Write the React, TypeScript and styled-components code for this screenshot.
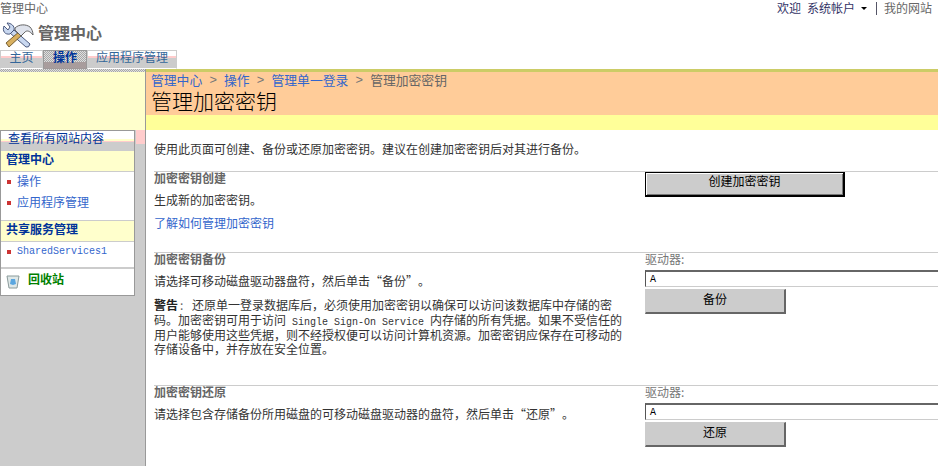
import React from "react";
import styled, { createGlobalStyle } from "styled-components";

const dots = "conic-gradient(#a8a8a8 25%, #dedede 0 50%, #a8a8a8 0 75%, #dedede 0) 0 0 / 2px 2px";

const GlobalStyle = createGlobalStyle`
  html, body {
    margin: 0;
    padding: 0;
    background: #fff;
    overflow: hidden;
  }
  body {
    font-family: "Noto Sans CJK SC", "Liberation Sans", sans-serif;
    font-size: 12px;
    line-height: 14px;
    text-spacing-trim: space-all;
  }
`;

const Page = styled.div`
  width: 938px;
  height: 466px;
  overflow: hidden;
  display: flex;
  flex-direction: column;
`;

const TopBar = styled.div`
  height: 22px;
  display: flex;
  justify-content: space-between;
  color: #666;
  line-height: 15px;
`;

const UserMenu = styled.div`
  display: flex;
  align-items: flex-start;
  padding-right: 6px;
`;

const UserText = styled.span`
  color: #333366;
  margin-right: 6px;
`;

const Caret = styled.span`
  width: 0;
  height: 0;
  margin: 7px 9px 0 0;
  border-left: 3px solid transparent;
  border-right: 3px solid transparent;
  border-top: 3px solid #000;
`;

const Pipe = styled.span`
  width: 1px;
  height: 13px;
  margin: 2px 7px 0 0;
  background: #556;
`;

const Brand = styled.div`
  height: 28px;
  box-sizing: border-box;
  padding: 0 0 2px 2px;
  display: flex;
  align-items: center;
  gap: 4px;
`;

const BrandName = styled.span`
  margin-bottom: 6px;
  font-size: 16px;
  line-height: 18px;
  font-weight: 700;
  color: #666;
`;

const TabRow = styled.div`
  height: 19px;
  display: flex;
`;

const Tab = styled.a<{ $active?: boolean; $width: number }>`
  width: ${(p) => p.$width}px;
  box-sizing: border-box;
  text-align: center;
  line-height: 12px;
  border: 1px solid ${(p) => (p.$active ? "#999" : "#ccc")};
  border-bottom-color: ${(p) => (p.$active ? "#a09999" : "#fff")};
  color: ${(p) => (p.$active ? "#003399" : "#336699")};
  font-weight: ${(p) => (p.$active ? 700 : 400)};
  background: ${(p) =>
    p.$active
      ? `linear-gradient(transparent 0 11px, #a89c9c 11px), ${dots}`
      : "linear-gradient(#fff 0 5px, #ffcccc 5px 7px, #ccc 7px)"};
`;

const Body = styled.div`
  flex: 1;
  display: flex;
  min-height: 0;
`;

const Side = styled.div`
  width: 145px;
  flex: none;
  display: flex;
  flex-direction: column;
  background: #ccc;
  border-right: 1px solid #999;
`;

const SideStrip = styled.div`
  height: 3px;
  background: ${dots};
`;

const SideTop = styled.div`
  height: 58px;
  background: #ffffcc;
`;

const SideRow = styled.div`
  display: flex;
  gap: 1px;
`;

const Pink = styled.div`
  width: 9px;
  height: 14px;
  background: #ffcccc;
`;

const NavBox = styled.div`
  width: 133px;
  height: 164px;
  background: #fff;
  border: 1px solid #999;
  display: flex;
  flex-direction: column;
`;

const ViewAll = styled.a`
  height: 20px;
  padding-left: 7px;
  color: #003399;
  line-height: 13px;
  background: linear-gradient(#fff 0 8px, #ffffcc 8px 10px, #ffcccc 10px 11px, #ccc 11px);
`;

const NavHeading = styled.div`
  height: 20px;
  padding-left: 5px;
  line-height: 15px;
  font-weight: 700;
  color: #003399;
  background: #ffffcc;
  border-bottom: 1px solid #ccc;
`;

const NavList = styled.ul<{ $height: number; $ruled?: boolean }>`
  list-style: none;
  margin: 0;
  padding: 2px 0 0;
  height: ${(p) => p.$height}px;
  box-sizing: border-box;
  border-bottom: ${(p) => (p.$ruled ? "1px solid #ccc" : "none")};
`;

const NavItem = styled.li<{ $mono?: boolean }>`
  position: relative;
  height: 21px;
  padding-left: 16px;
  line-height: ${(p) => (p.$mono ? 16 : 14)}px;
  color: #3366cc;
  font-family: ${(p) => (p.$mono ? '"Liberation Mono", monospace' : "inherit")};
  font-size: ${(p) => (p.$mono ? "10px" : "12px")};
  &::before {
    content: "";
    position: absolute;
    left: 6px;
    top: 6px;
    width: 4px;
    height: 4px;
    background: #cc3333;
  }
`;

const Recycle = styled.div`
  flex: 1;
  border-top: 2px solid #ccc;
  display: flex;
  align-items: flex-start;
  gap: 8px;
  padding: 3px 0 0 5px;
  font-weight: 700;
  color: #008000;
`;

const TrashWrap = styled.span`
  margin-top: 3px;
  display: flex;
`;

const Main = styled.div`
  flex: 1;
  min-width: 0;
  display: flex;
  flex-direction: column;
`;

const TitleArea = styled.div`
  height: 46px;
  box-sizing: border-box;
  background: #ffcc99;
  border-top: 3px solid #cccc66;
  padding: 0 5px;
`;

const Breadcrumb = styled.div`
  display: flex;
  gap: 7.2px;
  font-size: 12.8px;
  line-height: 16px;
  color: #3366cc;
`;

const Chevron = styled.span`
  font-family: "Liberation Sans", sans-serif;
  color: #777;
`;

const Current = styled.span`
  color: #666;
`;

const PageTitle = styled.h1`
  margin: 0;
  font-size: 21px;
  line-height: 24px;
  font-weight: 300;
  color: #000;
`;

const YellowBand = styled.div`
  height: 15px;
  background: #ffff99;
`;

const Content = styled.div`
  padding-left: 8px;
  color: #333;
`;

const Intro = styled.p`
  margin: 0;
  height: 41px;
  padding-top: 12px;
  box-sizing: border-box;
`;

const Section = styled.section<{ $height: number }>`
  height: ${(p) => p.$height}px;
  border-top: 1px solid #ccc;
  box-sizing: border-box;
  display: grid;
  grid-template-columns: 491px 1fr;
`;

const SectionTitle = styled.h3`
  margin: 0;
  font-size: 12px;
  line-height: 12px;
  font-weight: 700;
  color: #666;
`;

const Para = styled.p<{ $gap?: number }>`
  margin: ${(p) => p.$gap ?? 9}px 0 0;
  width: 469px;
  line-height: 14.4px;
`;

const Bold = styled.b`
  font-weight: 700;
  color: #222;
  margin-right: 14px;
  &::after {
    content: ":";
    position: absolute;
    margin-left: 2px;
    font-weight: 400;
    color: #666;
  }
`;

const Mono = styled.span`
  font-family: "Liberation Mono", monospace;
  font-size: 10px;
  line-height: 10px;
  white-space: pre;
`;

const Link = styled.a`
  display: block;
  margin-top: 9px;
  color: #3366cc;
`;

const Controls = styled.div`
  display: flex;
  flex-direction: column;
  align-items: flex-start;
`;

const Label = styled.label`
  height: 17px;
  line-height: 12px;
  color: #777;
`;

const DriveInput = styled.div`
  width: 320px;
  height: 17px;
  box-sizing: border-box;
  padding-left: 4px;
  line-height: 15px;
  font-family: "Liberation Mono", monospace;
  font-size: 10px;
  color: #000;
  background: #fff;
  border-top: 2px solid #666;
  border-left: 1px solid #555;
  border-bottom: 1px solid #ccc;
`;

const Button = styled.button<{ $width: number; $strong?: boolean }>`
  width: ${(p) => p.$width}px;
  height: 25px;
  margin-top: ${(p) => (p.$strong ? 0 : 2)}px;
  padding: 0 0 ${(p) => (p.$strong ? 7 : 5)}px;
  font: inherit;
  color: #000;
  background: #ccc;
  border: 1px solid #ccc;
  border-right: 2px solid #666;
  border-bottom: 2px solid #666;
  ${(p) =>
    p.$strong &&
    "border: 1px solid #000; border-right-width: 2px; border-bottom-width: 2px; box-shadow: inset 1px 1px 0 #fff, inset -1px -1px 0 #777;"}
`;

const ToolsIcon = () => (
  <svg width="32" height="26" viewBox="0 0 32 26">
    <path d="M8 11 L24 25 Q27 26 28 22 L12 8 Z" fill="#c9d8f0" stroke="#3b4a70" strokeWidth="0.9" />
    <path d="M2 4 C0 9 3 13 8 12 L12 8 C13 4 9 1 5 1 L8 5 L6 8 Z" fill="#c9d8f0" stroke="#3b4a70" strokeWidth="0.9" />
    <path d="M4 21 L7 25 L21 12 L18 9 Z" fill="#d8b060" stroke="#6a5020" strokeWidth="0.9" />
    <path d="M13 6 C17 2 24 2 28 5 C30 7 31 10 31 13 C28 9 25 8 23 10 L19 14 L13 8 Z" fill="#dfe3ec" stroke="#555" strokeWidth="0.9" />
  </svg>
);

const TrashIcon = () => (
  <svg width="14" height="14" viewBox="0 0 14 14">
    <path d="M1 1 H13 L11 13 H3 Z" fill="#dfe8e8" stroke="#8a9a9a" strokeWidth="1" />
    <path d="M5 4 L9 4 L10 9 L7 10 L4 9 Z" fill="#5aa6e0" />
  </svg>
);

export default function App() {
  return (
    <Page>
      <GlobalStyle />
      <TopBar>
        <span>管理中心</span>
        <UserMenu>
          <UserText>欢迎</UserText>
          <UserText>系统帐户</UserText>
          <Caret />
          <Pipe />
          <span>我的网站</span>
        </UserMenu>
      </TopBar>
      <Brand>
        <ToolsIcon />
        <BrandName>管理中心</BrandName>
      </Brand>
      <TabRow>
        <Tab $width={43}>主页</Tab>
        <Tab $width={44} $active>操作</Tab>
        <Tab $width={90}>应用程序管理</Tab>
      </TabRow>
      <Body>
        <Side>
          <SideStrip />
          <SideTop />
          <SideRow>
            <NavBox>
              <ViewAll>查看所有网站内容</ViewAll>
              <NavHeading>管理中心</NavHeading>
              <NavList $height={49} $ruled>
                <NavItem>操作</NavItem>
                <NavItem>应用程序管理</NavItem>
              </NavList>
              <NavHeading>共享服务管理</NavHeading>
              <NavList $height={25}>
                <NavItem $mono>SharedServices1</NavItem>
              </NavList>
              <Recycle>
                <TrashWrap>
                  <TrashIcon />
                </TrashWrap>
                回收站
              </Recycle>
            </NavBox>
            <Pink />
          </SideRow>
        </Side>
        <Main>
          <TitleArea>
            <Breadcrumb>
              <span>管理中心</span>
              <Chevron>&gt;</Chevron>
              <span>操作</span>
              <Chevron>&gt;</Chevron>
              <span>管理单一登录</span>
              <Chevron>&gt;</Chevron>
              <Current>管理加密密钥</Current>
            </Breadcrumb>
            <PageTitle>管理加密密钥</PageTitle>
          </TitleArea>
          <YellowBand />
          <Content>
            <Intro>使用此页面可创建、备份或还原加密密钥。建议在创建加密密钥后对其进行备份。</Intro>
            <Section $height={81}>
              <div>
                <SectionTitle>加密密钥创建</SectionTitle>
                <Para>生成新的加密密钥。</Para>
                <Link>了解如何管理加密密钥</Link>
              </div>
              <Controls>
                <Button $width={200} $strong>创建加密密钥</Button>
              </Controls>
            </Section>
            <Section $height={133}>
              <div>
                <SectionTitle>加密密钥备份</SectionTitle>
                <Para>请选择可移动磁盘驱动器盘符，然后单击“备份”。</Para>
                <Para $gap={10}>
                  <Bold>警告</Bold>还原单一登录数据库后，必须使用加密密钥以确保可以访问该数据库中存储的密码。加密密钥可用于访问<Mono> Single Sign-On Service </Mono>内存储的所有凭据。如果不受信任的用户能够使用这些凭据，则不经授权便可以访问计算机资源。加密密钥应保存在可移动的存储设备中，并存放在安全位置。
                </Para>
              </div>
              <Controls>
                <Label>驱动器:</Label>
                <DriveInput>A</DriveInput>
                <Button $width={141}>备份</Button>
              </Controls>
            </Section>
            <Section $height={81}>
              <div>
                <SectionTitle>加密密钥还原</SectionTitle>
                <Para>请选择包含存储备份所用磁盘的可移动磁盘驱动器的盘符，然后单击“还原”。</Para>
              </div>
              <Controls>
                <Label>驱动器:</Label>
                <DriveInput>A</DriveInput>
                <Button $width={141}>还原</Button>
              </Controls>
            </Section>
          </Content>
        </Main>
      </Body>
    </Page>
  );
}
